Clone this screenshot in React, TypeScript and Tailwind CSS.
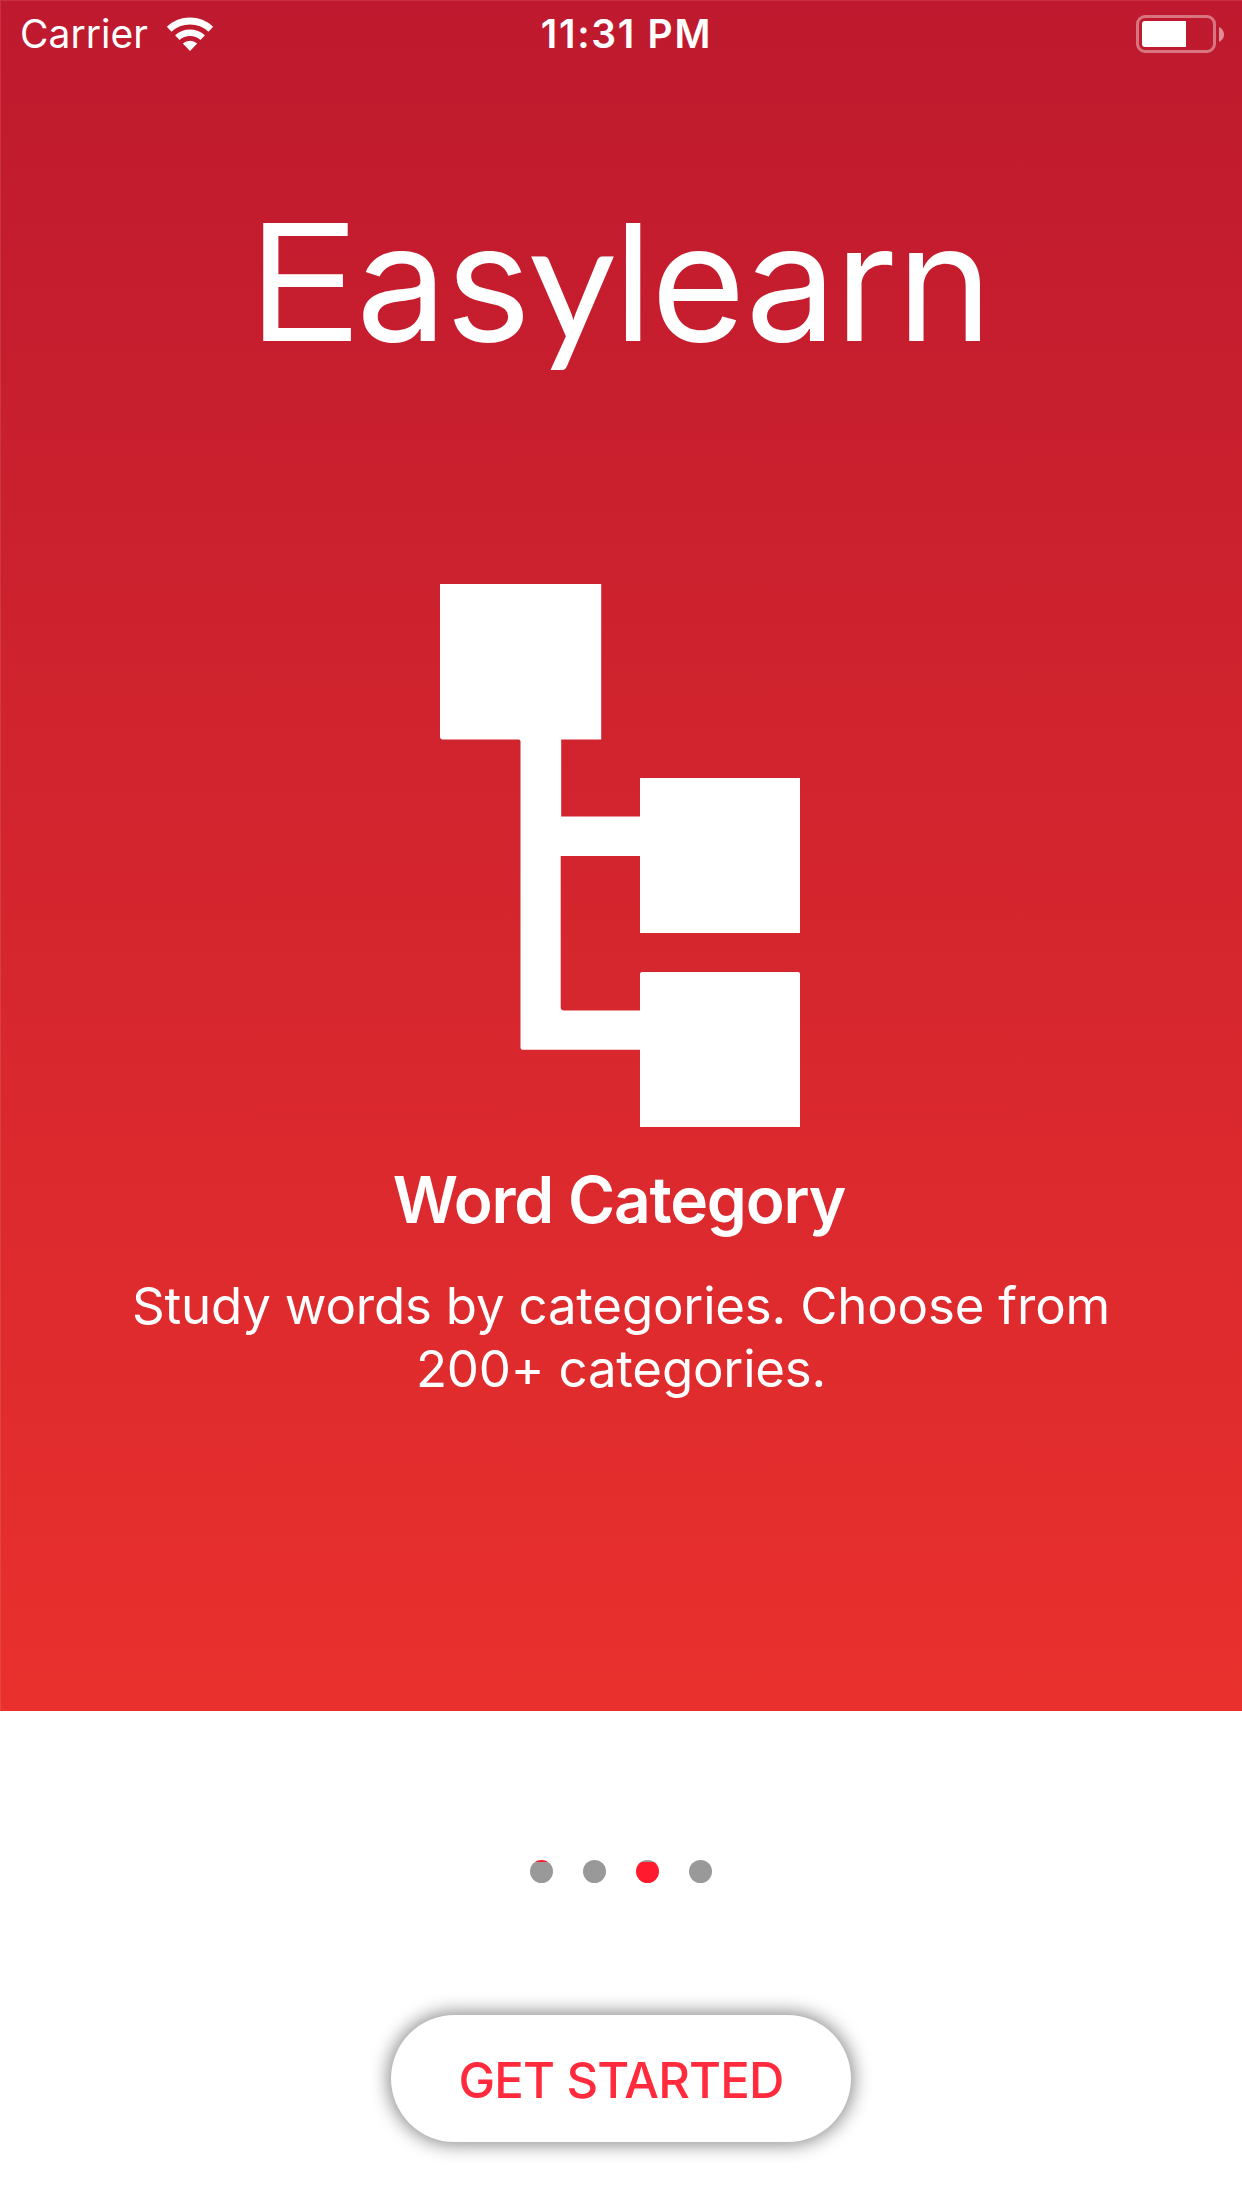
import React from "react";

function WifiIcon() {
  return (
    <svg className="mt-[15px] ml-[18px] h-[36px] w-[48px]" viewBox="0 0 48 36" fill="none">
      <path d="M3.2 13.2 A30.5 30.5 0 0 1 44.8 13.2" stroke="white" strokeWidth="6.8" />
      <path d="M11.3 21.6 A19 19 0 0 1 36.7 21.6" stroke="white" strokeWidth="6.6" />
      <path d="M24 35 L16.8 27.6 A10.5 10.5 0 0 1 31.2 27.6 Z" fill="white" />
    </svg>
  );
}

function BatteryIcon() {
  return (
    <div className="mt-[15px] mr-[17px] flex h-[38px] items-center gap-[3px]">
      <div className="h-[38px] w-[80px] rounded-[9px] border-[3px] border-white/40 p-[3px]">
        <div className="h-[26px] w-[44px] rounded-l-[3px] bg-white" />
      </div>
      <svg className="h-[15px] w-[5px]" viewBox="0 0 5 15">
        <path d="M0 0 C3 1.5 5 4 5 7.5 C5 11 3 13.5 0 15 Z" fill="white" fillOpacity="0.5" />
      </svg>
    </div>
  );
}

function StatusBar() {
  return (
    <header className="grid h-[65px] grid-cols-3 items-start pr-px text-[39px] leading-[40px]">
      <div className="flex items-start pl-[19px]">
        <span className="mt-[13px]">Carrier</span>
        <WifiIcon />
      </div>
      <div className="mt-[13px] pl-[11px] text-center font-semibold tracking-[1.7px] whitespace-nowrap">11:31 PM</div>
      <div className="-mt-px flex justify-end">
        <BatteryIcon />
      </div>
    </header>
  );
}

function CategoryIcon() {
  return (
    <svg className="mt-[204px] mr-[3px] h-[543px] w-[360px]" viewBox="0 0 360 543" fill="white">
      <path d="M0 0 H161.2 V155.5 H121.2 V232.5 H200 V194 H360 V349 H200 V272 H120.7 V423 Q120.7 426.5 124.2 426.5 H200 V390 Q200 388 202 388 H358 Q360 388 360 390 V543.3 H200 V465.7 H82.5 Q80.5 465.7 80.5 463.7 V157.5 Q80.5 155.5 78.5 155.5 H3 Q0 155.5 0 152.5 Z" />
    </svg>
  );
}

export default function App() {
  return (
    <div className="flex h-[2208px] w-[1242px] flex-col bg-white font-['Inter',sans-serif]">
      <section className="flex h-[1711px] flex-col border-t border-l border-white/10 bg-linear-to-b from-[#be192e] to-[#e9302d] bg-origin-border text-white">
        <StatusBar />
        <main className="flex flex-col items-center text-center">
          <h1 className="mt-[118px] h-[196px] pr-[2px] text-[162px] leading-[196px] font-normal tracking-[-1.6px] whitespace-nowrap">
            <span className="inline-block w-[106px] origin-left scale-x-[0.945] text-left font-['Liberation_Sans',sans-serif] text-[171px] leading-none tracking-normal">
              E
            </span>
            as<span className="font-['Lato',sans-serif] text-[166px] leading-none">y</span>learn
          </h1>
          <CategoryIcon />
          <h2 className="mt-[35px] pr-[5px] text-[64px] leading-[76px] font-semibold tracking-[-1.2px]">Word Category</h2>
          <p className="mt-[36px] mr-px w-[1040px] text-[51px] leading-[63px] tracking-[-0.2px]">
            Study words by categories. Choose from
            <br />
            200+ categories.
          </p>
        </main>
      </section>
      <section className="flex flex-col items-center">
        <div className="mt-[149px] flex gap-[30px]">
          <span className="size-[23px] rounded-full bg-linear-to-b from-[#ff1a2e] from-[1.5px] to-[#999999] to-[2px]" />
          <span className="size-[23px] rounded-full bg-[#999999]" />
          <span className="size-[23px] rounded-full bg-linear-to-b from-[#999999] from-[1.5px] to-[#ff1a2e] to-[2px]" />
          <span className="size-[23px] rounded-full bg-[#999999]" />
        </div>
        <button className="mt-[132px] h-[127px] w-[460px] rounded-full bg-white pt-[3px] text-[49px] leading-[49px] font-medium tracking-[-0.8px] text-[#ff2b3c] shadow-[0_0_18px_3px_rgba(0,0,0,0.45)]">
          GET STARTED
        </button>
      </section>
    </div>
  );
}
